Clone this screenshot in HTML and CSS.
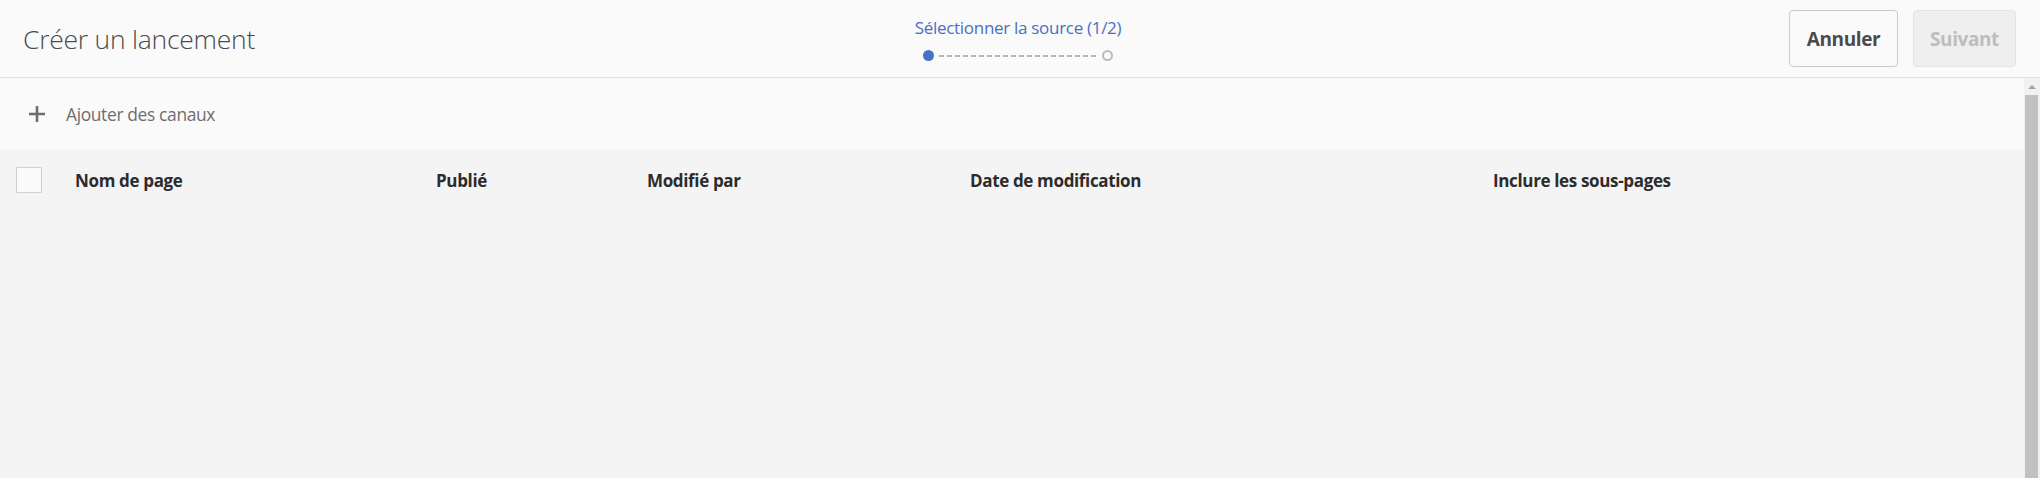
FILE: index.html
```html
<!DOCTYPE html>
<html lang="fr">
<head>
<meta charset="utf-8">
<title>Créer un lancement</title>
<link rel="stylesheet" href="styles.css">
</head>
<body>
<div class="app">
  <header class="topbar">
    <h1 class="title">Créer un lancement</h1>
    <div class="wizard">
      <div class="step-label">Sélectionner la source (1/2)</div>
      <div class="steps">
        <span class="dot dot-active"></span>
        <span class="dash"></span>
        <span class="dot dot-next"></span>
      </div>
    </div>
    <div class="actions">
      <button class="btn btn-cancel">Annuler</button>
      <button class="btn btn-next" disabled>Suivant</button>
    </div>
  </header>
  <main class="body-area">
    <div class="content">
      <div class="toolbar">
        <button class="add-btn">
          <svg class="plus" width="18" height="18" viewBox="0 0 18 18"><path d="M9 1v16M1 9h16" stroke="#6e6e6e" stroke-width="2.6" fill="none"/></svg>
          <span>Ajouter des canaux</span>
        </button>
      </div>
      <div class="table-head">
        <div class="cell cell-check"><span class="checkbox"></span></div>
        <div class="cell">Nom de page</div>
        <div class="cell">Publié</div>
        <div class="cell">Modifié par</div>
        <div class="cell">Date de modification</div>
        <div class="cell">Inclure les sous-pages</div>
      </div>
    </div>
    <div class="scrollbar">
      <span class="scroll-arrow"></span>
      <span class="scroll-thumb"></span>
    </div>
  </main>
</div>
</body>
</html>
```

FILE: styles.css
```css
* { box-sizing: border-box; }
html, body { margin: 0; padding: 0; height: 100%; overflow: hidden; }
body {
  font-family: "Open Sans", "Liberation Sans", sans-serif;
  background: #fafafa;
  color: #4b4b4b;
}
.app { display: flex; flex-direction: column; height: 100%; }
.topbar {
  height: 78px;
  flex: none;
  display: flex;
  align-items: center;
  justify-content: space-between;
  border-bottom: 1px solid #e1e1e1;
  background: #fafafa;
  padding: 0 24px 0 23px;
  position: relative;
}
.title {
  margin: 0;
  font-size: 26.5px;
  font-weight: 300;
  color: #4b4b4b;
  letter-spacing: -0.25px;
}
.wizard {
  position: absolute;
  left: 910px;
  top: 16px;
  width: 216px;
  display: flex;
  flex-direction: column;
  align-items: center;
}
.step-label {
  font-size: 17px;
  color: #4a6fc2;
  letter-spacing: -0.3px;
  line-height: 24px;
}
.steps { display: flex; align-items: center; margin-top: 10px; gap: 5px; }
.dot { width: 11px; height: 11px; border-radius: 50%; display: block; }
.dot-active { background: #4771c3; }
.dot-next { border: 2.5px solid #bcbcbc; }
.dash {
  width: 158px;
  height: 2px;
  background: repeating-linear-gradient(90deg, #b5b5b5 0 5px, transparent 5px 8px);
}
.actions { display: flex; gap: 15px; }
.btn {
  height: 57px;
  border-radius: 4px;
  font-family: "Open Sans", "Liberation Sans", sans-serif;
  font-weight: 700;
  font-size: 19px;
  letter-spacing: -0.4px;
  padding: 0;
}
.btn-cancel { background: #fafafa; border: 1px solid #cacaca; color: #4b4b4b; width: 109px; }
.btn-next { background: #efefef; border: 1px solid #e4e4e4; color: #bdbdbd; width: 103px; }
.body-area {
  flex: 1;
  display: flex;
  min-height: 0;
  background: #f4f4f4;
}
.content { flex: 1; min-width: 0; }
.scrollbar {
  width: 16px;
  flex: none;
  background: #f1f1f1;
  display: flex;
  flex-direction: column;
  align-items: center;
  padding: 7px 2px 0 1px;
}
.scroll-arrow {
  width: 0; height: 0;
  border-left: 4px solid transparent;
  border-right: 4px solid transparent;
  border-bottom: 4px solid #a3a3a3;
  margin-left: 1px;
}
.scroll-thumb {
  margin-top: 6px;
  width: 13px;
  flex: 1;
  background: #c1c1c1;
}
.toolbar {
  height: 72px;
  background: #fafafa;
  display: flex;
  align-items: center;
  padding-left: 28px;
}
.add-btn {
  display: flex;
  align-items: center;
  gap: 20px;
  border: 0;
  background: none;
  padding: 0;
  font-family: "Open Sans", "Liberation Sans", sans-serif;
  font-size: 17.4px;
  color: #6e6e6e;
  letter-spacing: -0.35px;
}
.table-head {
  display: grid;
  grid-template-columns: 75px 361px 211px 323px 523px 1fr;
  align-items: center;
  height: 60px;
  font-weight: 700;
  font-size: 17px;
  color: #2c2c2c;
  letter-spacing: -0.35px;
}
.cell-check { padding-left: 16px; display: flex; }
.checkbox {
  width: 26px; height: 26px;
  border: 1px solid #cfcfcf;
  background: #fafafa;
  border-radius: 1px;
  display: block;
}
```
